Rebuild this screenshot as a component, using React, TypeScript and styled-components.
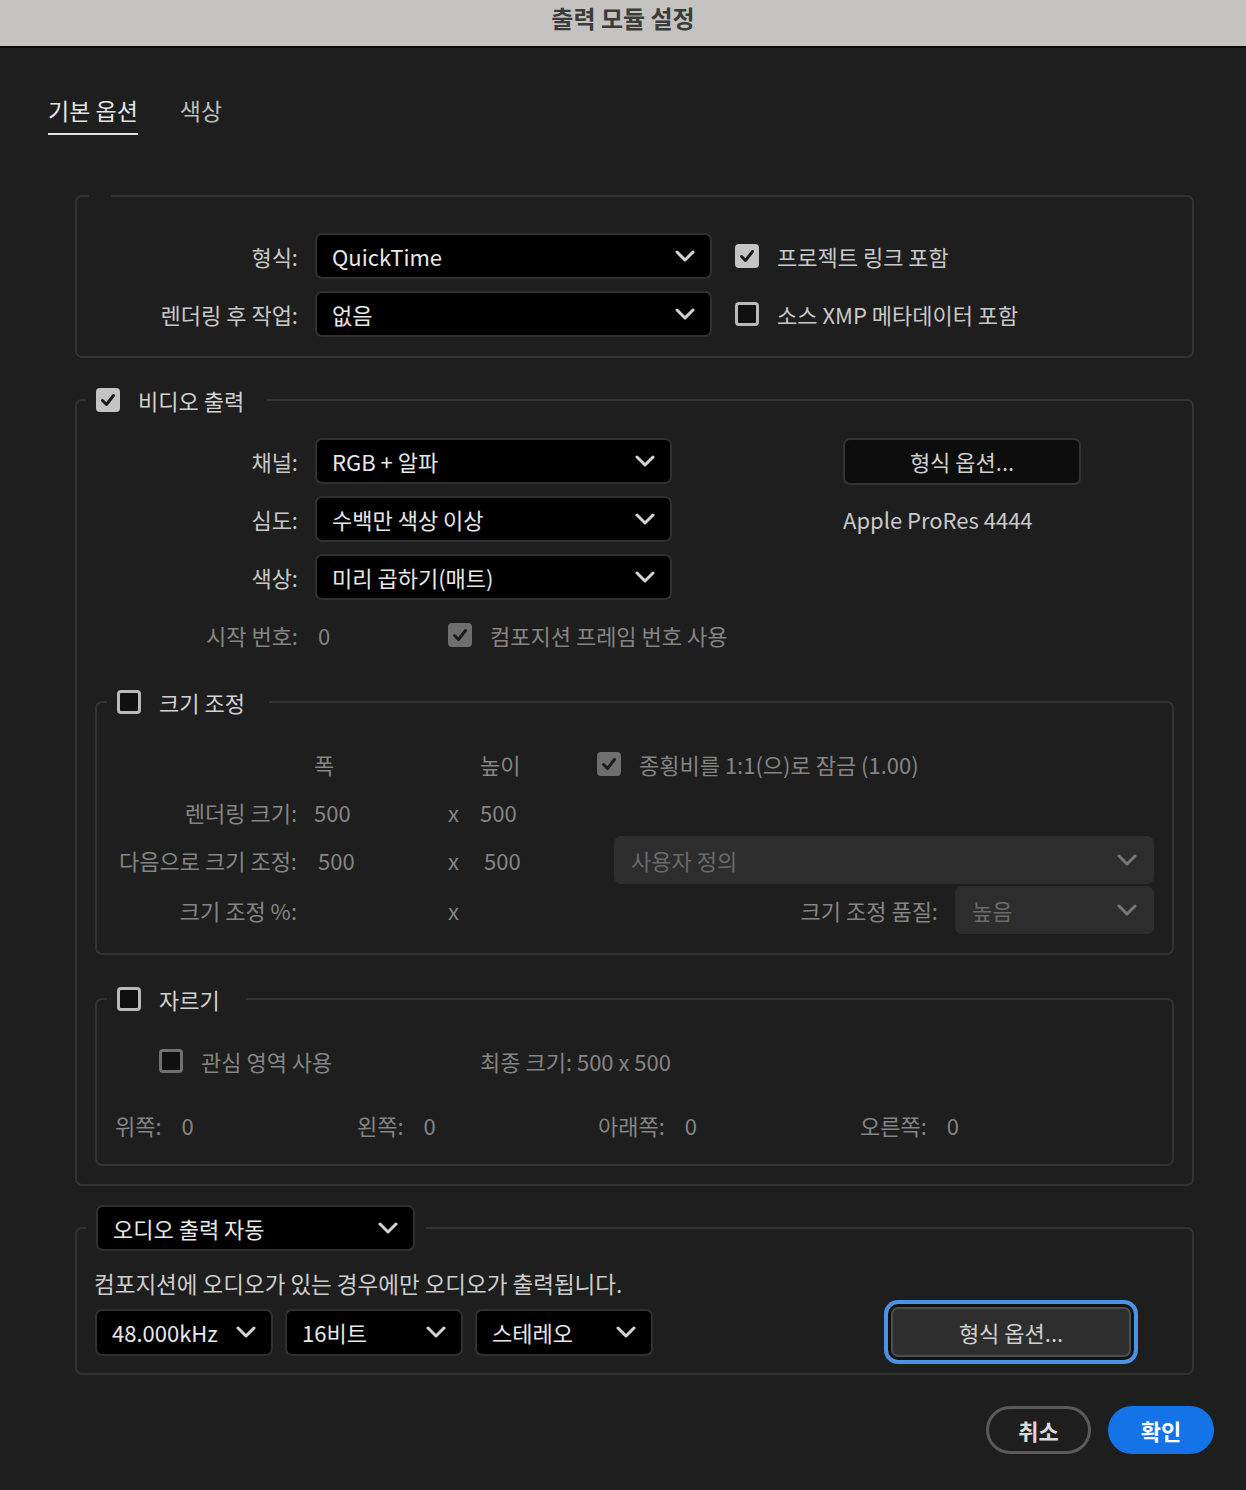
import React from "react";
import styled, { createGlobalStyle } from "styled-components";

const GlobalStyle = createGlobalStyle`
  html, body { margin: 0; padding: 0; background: #1e1e1e; }
  body {
    font-family: "Noto Sans CJK KR", "Noto Sans", sans-serif;
    color: #c8c8c8;
    -webkit-font-smoothing: antialiased;
  }
  * { box-sizing: border-box; }
`;

const Window = styled.div`
  width: 1246px;
  min-height: 1490px;
  background: #1e1e1e;
`;

const TitleBar = styled.header`
  height: 48px;
  background: #c4c3c1;
  border-bottom: 2px solid #0b0b0b;
  display: flex;
  justify-content: center;
  padding-top: 3px;
  font-size: 24px;
  line-height: 30px;
  font-weight: 700;
  color: #3b3b3b;
`;

const Tabs = styled.nav`
  display: flex;
  gap: 42px;
  margin-top: 49px;
  padding-left: 48px;
`;

const Tab = styled.div<{ $active?: boolean }>`
  font-size: 23px;
  line-height: 26px;
  padding-bottom: 10px;
  color: ${(p) => (p.$active ? "#e4e4e4" : "#bdbdbd")};
  border-bottom: 2px solid ${(p) => (p.$active ? "#e4e4e4" : "transparent")};
`;

const Content = styled.main`
  padding: 60px 52px 0 75px;
  display: flex;
  flex-direction: column;
`;

const Group = styled.fieldset<{ $mt?: number }>`
  margin: ${(p) => p.$mt ?? 0}px 0 0 0;
  padding: 0;
  min-inline-size: 0;
  border: 2px solid #333333;
  border-radius: 7px;
`;

const Legend = styled.legend<{ $ml: number; $pr: number }>`
  margin-left: ${(p) => p.$ml}px;
  padding: 0 ${(p) => p.$pr}px 0 10px;
  line-height: 0;
`;

const EmptyLegend = styled.legend`
  margin-left: 12px;
  padding: 0;
  width: 22px;
  height: 2px;
`;

const LegendInner = styled.div`
  display: flex;
  align-items: center;
  gap: 18px;
  height: 24px;
  font-size: 22px;
  line-height: 24px;
  color: #d2d2d2;
  white-space: nowrap;
`;

const TopGrid = styled.div`
  display: grid;
  grid-template-columns: 238px 397px 1fr;
  grid-auto-rows: 46px;
  row-gap: 12px;
  padding: 36px 0 19px;
  align-items: center;
`;

const Label = styled.span<{ $dim?: boolean }>`
  font-size: 22px;
  line-height: 26px;
  text-align: right;
  padding-right: 17px;
  white-space: nowrap;
  color: ${(p) => (p.$dim ? "#858585" : "#c9c9c9")};
`;

const Text = styled.span<{ $dim?: boolean; $pl?: number }>`
  font-size: 22px;
  line-height: 26px;
  white-space: nowrap;
  padding-left: ${(p) => p.$pl ?? 0}px;
  color: ${(p) => (p.$dim ? "#858585" : "#c9c9c9")};
`;

const SelectBox = styled.div<{ $w?: number; $h?: number; $disabled?: boolean }>`
  display: flex;
  align-items: center;
  justify-content: space-between;
  width: ${(p) => (p.$w ? `${p.$w}px` : "100%")};
  height: ${(p) => p.$h ?? 46}px;
  padding: 0 15px 0 15px;
  background: ${(p) => (p.$disabled ? "#2d2d2d" : "#000000")};
  border: 2px solid ${(p) => (p.$disabled ? "#2d2d2d" : "#303030")};
  border-radius: 7px;
  font-size: 22px;
  line-height: 26px;
  color: ${(p) => (p.$disabled ? "#6a6a6a" : "#e8e8e8")};
  white-space: nowrap;
`;

const CheckRow = styled.div<{ $w?: number; $ml?: number }>`
  display: flex;
  align-items: center;
  gap: 18px;
  ${(p) => (p.$w ? `width: ${p.$w}px;` : "")}
  margin-left: ${(p) => p.$ml ?? 0}px;
`;

const Box = styled.span<{ $checked?: boolean; $disabled?: boolean }>`
  display: inline-flex;
  align-items: center;
  justify-content: center;
  flex: none;
  width: 24px;
  height: 24px;
  border-radius: 4px;
  background: ${(p) =>
    p.$checked ? (p.$disabled ? "#6e6e6e" : "#c4c4c4") : "#101010"};
  border: ${(p) =>
    p.$checked ? "none" : `3px solid ${p.$disabled ? "#707070" : "#b9b9b9"}`};
`;

const PushButton = styled.div<{ $focus?: boolean }>`
  display: flex;
  align-items: center;
  justify-content: center;
  width: ${(p) => (p.$focus ? 240 : 238)}px;
  height: ${(p) => (p.$focus ? 50 : 47)}px;
  background: ${(p) => (p.$focus ? "#2e2e2e" : "#0d0d0d")};
  border: 2px solid ${(p) => (p.$focus ? "#4d4d4d" : "#333333")};
  border-radius: 7px;
  font-size: 22px;
  line-height: 26px;
  color: #cfcfcf;
  ${(p) => (p.$focus ? "box-shadow: 0 0 0 3px #121212, 0 0 0 7px #4a92e4;" : "")}
`;

const VideoBody = styled.div`
  padding: 26px 18px 18px;
`;

const VideoGrid = styled.div`
  display: grid;
  grid-template-columns: 238px 357px 171px 238px;
  grid-auto-rows: 46px;
  row-gap: 12px;
  align-items: center;
  margin-left: -18px;
`;

const SpanCell = styled.div`
  grid-column: 2 / -1;
  display: flex;
  align-items: center;
`;

const ValueSlot = styled.span<{ $w: number; $pl?: number }>`
  width: ${(p) => p.$w}px;
  padding-left: ${(p) => p.$pl ?? 0}px;
  font-size: 22px;
  line-height: 26px;
  color: #858585;
  white-space: nowrap;
`;

const ResizeGrid = styled.div`
  display: grid;
  grid-template-columns: 217px 134px 32px 134px 1fr;
  grid-template-rows: 48px 48px 48px 52px;
  align-items: center;
  padding: 26px 18px 17px 0;
`;

const Wide = styled.div<{ $from: number }>`
  grid-column: ${(p) => p.$from} / -1;
  display: flex;
  align-items: center;
`;

const EndCell = styled.div`
  display: flex;
  align-items: center;
  justify-content: flex-end;
  gap: 17px;
`;

const CropBody = styled.div`
  padding: 27px 18px 16px;
  display: flex;
  flex-direction: column;
  gap: 18px;
`;

const CropRow = styled.div`
  display: flex;
  align-items: center;
  height: 46px;
`;

const SideGrid = styled.div`
  display: grid;
  grid-template-columns: 242px 241px 262px 1fr;
  height: 46px;
  align-items: center;
`;

const Side = styled.div`
  display: flex;
  align-items: center;
  gap: 20px;
`;

const AudioBody = styled.div`
  padding: 19px 61px 16px 17px;
`;

const AudioNote = styled.div`
  font-size: 22.5px;
  line-height: 26px;
  color: #cdcdcd;
  white-space: nowrap;
`;

const AudioRow = styled.div`
  display: flex;
  align-items: center;
  justify-content: space-between;
  height: 50px;
  margin-top: 11px;
  padding-left: 1px;
`;

const Selects = styled.div`
  display: flex;
  gap: 12px;
`;

const Footer = styled.footer`
  display: flex;
  justify-content: flex-end;
  gap: 17px;
  padding: 31px 32px 0 0;
`;

const Pill = styled.div<{ $primary?: boolean }>`
  display: flex;
  align-items: center;
  justify-content: center;
  width: ${(p) => (p.$primary ? 106 : 105)}px;
  height: 48px;
  border-radius: 24px;
  font-size: 22px;
  font-weight: 700;
  background: ${(p) => (p.$primary ? "#1473e6" : "transparent")};
  border: ${(p) => (p.$primary ? "none" : "3px solid #5a5a5a")};
  color: ${(p) => (p.$primary ? "#ffffff" : "#dadada")};
`;

const Chevron = ({ color = "#d4d4d4" }: { color?: string }) => (
  <svg width="20" height="12" viewBox="0 0 20 12">
    <path
      d="M2 2 L10 10 L18 2"
      fill="none"
      stroke={color}
      strokeWidth="3"
      strokeLinecap="round"
      strokeLinejoin="round"
    />
  </svg>
);

const Check = ({ checked, disabled }: { checked?: boolean; disabled?: boolean }) => (
  <Box $checked={checked} $disabled={disabled}>
    {checked && (
      <svg width="24" height="24" viewBox="0 0 24 24">
        <path
          d="M6.5 12.5 L10.5 16.5 L17.5 7.5"
          fill="none"
          stroke={disabled ? "#1c1c1c" : "#1a1a1a"}
          strokeWidth="3"
          strokeLinecap="round"
          strokeLinejoin="round"
        />
      </svg>
    )}
  </Box>
);

const Select = ({
  value,
  w,
  h,
  disabled,
}: {
  value: string;
  w?: number;
  h?: number;
  disabled?: boolean;
}) => (
  <SelectBox $w={w} $h={h} $disabled={disabled}>
    <span>{value}</span>
    <Chevron color={disabled ? "#787878" : "#d4d4d4"} />
  </SelectBox>
);

export default function App() {
  return (
    <Window>
      <GlobalStyle />
      <TitleBar>출력 모듈 설정</TitleBar>
      <Tabs>
        <Tab $active>기본 옵션</Tab>
        <Tab>색상</Tab>
      </Tabs>

      <Content>
        <Group>
          <EmptyLegend />
          <TopGrid>
            <Label>형식:</Label>
            <Select value="QuickTime" />
            <CheckRow $ml={23}>
              <Check checked />
              <Text>프로젝트 링크 포함</Text>
            </CheckRow>
            <Label>렌더링 후 작업:</Label>
            <Select value="없음" />
            <CheckRow $ml={23}>
              <Check />
              <Text>소스 XMP 메타데이터 포함</Text>
            </CheckRow>
          </TopGrid>
        </Group>

        <Group $mt={30}>
          <Legend $ml={9} $pr={23}>
            <LegendInner>
              <Check checked />
              비디오 출력
            </LegendInner>
          </Legend>
          <VideoBody>
            <VideoGrid>
              <Label>채널:</Label>
              <Select value="RGB + 알파" />
              <span />
              <PushButton>형식 옵션...</PushButton>

              <Label>심도:</Label>
              <Select value="수백만 색상 이상" />
              <span />
              <Text>Apple ProRes 4444</Text>

              <Label>색상:</Label>
              <Select value="미리 곱하기(매트)" />
              <span />
              <span />

              <Label $dim>시작 번호:</Label>
              <SpanCell>
                <ValueSlot $w={133} $pl={3}>
                  0
                </ValueSlot>
                <CheckRow>
                  <Check checked disabled />
                  <Text $dim>컴포지션 프레임 번호 사용</Text>
                </CheckRow>
              </SpanCell>
            </VideoGrid>

            <Group $mt={32}>
              <Legend $ml={10} $pr={24}>
                <LegendInner>
                  <Check />
                  크기 조정
                </LegendInner>
              </Legend>
              <ResizeGrid>
                <span />
                <Text $dim>폭</Text>
                <span />
                <Wide $from={4}>
                  <ValueSlot $w={117}>높이</ValueSlot>
                  <CheckRow>
                    <Check checked disabled />
                    <Text $dim>종횡비를 1:1(으)로 잠금 (1.00)</Text>
                  </CheckRow>
                </Wide>

                <Label $dim>렌더링 크기:</Label>
                <Text $dim>500</Text>
                <Text $dim>x</Text>
                <Text $dim>500</Text>
                <span />

                <Label $dim>다음으로 크기 조정:</Label>
                <Text $dim $pl={4}>
                  500
                </Text>
                <Text $dim>x</Text>
                <Text $dim $pl={4}>
                  500
                </Text>
                <Select value="사용자 정의" h={48} disabled />

                <Label $dim>크기 조정 %:</Label>
                <span />
                <Text $dim>x</Text>
                <span />
                <EndCell>
                  <Text $dim>크기 조정 품질:</Text>
                  <Select value="높음" w={199} h={48} disabled />
                </EndCell>
              </ResizeGrid>
            </Group>

            <Group $mt={32}>
              <Legend $ml={10} $pr={26}>
                <LegendInner>
                  <Check />
                  자르기
                </LegendInner>
              </Legend>
              <CropBody>
                <CropRow>
                  <CheckRow $w={321} $ml={44}>
                    <Check disabled />
                    <Text $dim>관심 영역 사용</Text>
                  </CheckRow>
                  <Text $dim>최종 크기: 500 x 500</Text>
                </CropRow>
                <SideGrid>
                  <Side>
                    <Text $dim>위쪽:</Text>
                    <Text $dim>0</Text>
                  </Side>
                  <Side>
                    <Text $dim>왼쪽:</Text>
                    <Text $dim>0</Text>
                  </Side>
                  <Side>
                    <Text $dim>아래쪽:</Text>
                    <Text $dim>0</Text>
                  </Side>
                  <Side>
                    <Text $dim>오른쪽:</Text>
                    <Text $dim>0</Text>
                  </Side>
                </SideGrid>
              </CropBody>
            </Group>
          </VideoBody>
        </Group>

        <Group $mt={19}>
          <Legend $ml={9} $pr={11}>
            <Select value="오디오 출력 자동" w={319} />
          </Legend>
          <AudioBody>
            <AudioNote>컴포지션에 오디오가 있는 경우에만 오디오가 출력됩니다.</AudioNote>
            <AudioRow>
              <Selects>
                <Select value="48.000kHz" w={178} h={47} />
                <Select value="16비트" w={178} h={47} />
                <Select value="스테레오" w={178} h={47} />
              </Selects>
              <PushButton $focus>형식 옵션...</PushButton>
            </AudioRow>
          </AudioBody>
        </Group>
      </Content>

      <Footer>
        <Pill>취소</Pill>
        <Pill $primary>확인</Pill>
      </Footer>
    </Window>
  );
}
